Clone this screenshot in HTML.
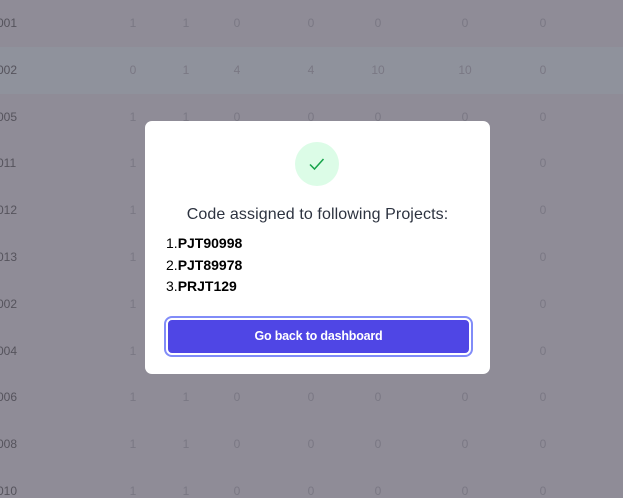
<!DOCTYPE html>
<html style="overflow:hidden;height:498px"><head><style>
body{margin:0;width:623px;height:498px;overflow:hidden;background:#8f8c97;font-family:"Liberation Sans",sans-serif;position:relative}
.row{position:absolute;left:0;width:623px;height:47px;font-size:12px;color:#7a7884}
.row span{position:absolute;top:16px;transform:translateX(-50%)}
.row .id{left:-3px;transform:none;color:#55535c}
.hl{background:#8f929c}
.modal{position:absolute;left:145px;top:121px;width:345px;height:253px;background:#fff;border-radius:7px}
.circ{position:absolute;left:150px;top:21px;width:44px;height:44px;border-radius:50%;background:#dcfce7}
.title{position:absolute;top:85px;width:100%;text-align:center;font-size:16px;color:#2d3340;letter-spacing:0.1px}
.li{position:absolute;left:21px;font-size:14px;color:#000}
.btn{position:absolute;left:21px;top:197px;width:301px;height:33px;background:#4f46e5;border-radius:6px;border:2px solid #fff;box-shadow:0 0 0 2px #818cf8;color:#fff;font-size:12.5px;font-weight:bold;text-align:center;line-height:33px;letter-spacing:-0.2px}
</style></head><body>
<div id="rows"></div>
<script>
var ids=["001","002","005","011","012","013","002","004","006","008","010"];
var xs=[133,186,237,311,378,465,543];
var h="";
for(var i=0;i<11;i++){
 var v=i==1?["0","1","4","4","10","10","0"]:["1","1","0","0","0","0","0"];
 h+='<div class="row'+(i==1?' hl':'')+'" style="top:'+(i*46.8)+'px"><span class="id">'+ids[i]+'</span>';
 for(var j=0;j<7;j++)h+='<span style="left:'+xs[j]+'px">'+v[j]+'</span>';
 h+='</div>';
}
document.getElementById("rows").innerHTML=h;
</script>
<div class="modal">
<div class="circ"><svg width="44" height="44" viewBox="0 0 44 44"><path d="M15 22.5l4.5 4.5 9-10" fill="none" stroke="#16a34a" stroke-width="1.5"/></svg></div>
<div class="title">Code assigned to following Projects:</div>
<div class="li" style="top:114px">1.<b>PJT90998</b></div>
<div class="li" style="top:136px">2.<b>PJT89978</b></div>
<div class="li" style="top:157px">3.<b>PRJT129</b></div>
<div class="btn">Go back to dashboard</div>
</div>
</body></html>
